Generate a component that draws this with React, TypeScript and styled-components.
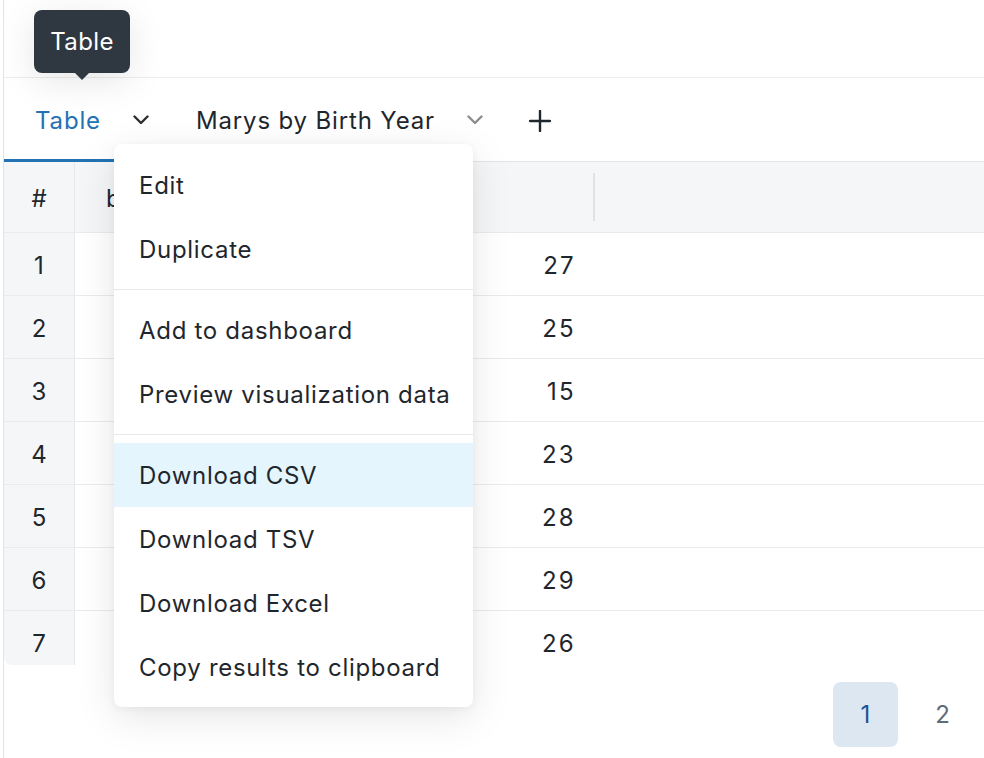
import React from "react";
import styled, { createGlobalStyle } from "styled-components";

const GlobalStyle = createGlobalStyle`
  html, body {
    margin: 0;
    padding: 0;
    background: #ffffff;
  }
  body {
    font-family: "Inter", "Noto Sans", sans-serif;
    color: #1f272d;
    letter-spacing: 0.7px;
    -webkit-font-smoothing: antialiased;
  }
`;

const counts = [27, 25, 15, 23, 28, 29, 26];

// menu groups, a divider is drawn between each group
const menuGroups = [
  ["Edit", "Duplicate"],
  ["Add to dashboard", "Preview visualization data"],
  ["Download CSV", "Download TSV", "Download Excel", "Copy results to clipboard"],
];

const Chevron: React.FC<{ muted?: boolean }> = ({ muted }) => (
  <svg width="16" height="10" viewBox="0 0 16 10" fill="none">
    <polyline
      points="1.5,1.5 8,8 14.5,1.5"
      stroke={muted ? "#8e8b91" : "#2b2f33"}
      strokeWidth="2.4"
      strokeLinecap="round"
      strokeLinejoin="round"
    />
  </svg>
);

const PlusIcon = () => (
  <svg width="22" height="22" viewBox="0 0 22 22" fill="none">
    <path d="M11 1v20M1 11h20" stroke="#1f272d" strokeWidth="2.4" strokeLinecap="round" />
  </svg>
);

const App: React.FC = () => {
  return (
    <>
      <GlobalStyle />
      <Page>
        <TopSpace />
        <TabBar>
          <Tab active>
            <TabLabel active>Table</TabLabel>
            <IconBox>
              <Chevron />
            </IconBox>
          </Tab>
          <Tab>
            <TabLabel>Marys by Birth Year</TabLabel>
            <IconBox>
              <Chevron muted />
            </IconBox>
          </Tab>
          <AddButton>
            <PlusIcon />
          </AddButton>
        </TabBar>

        <TableArea>
          <Row header>
            <IndexCell>#</IndexCell>
            <Cell>b</Cell>
            <Cell resizer />
            <Cell />
          </Row>
          {counts.map((c, i) => (
            <Row key={i}>
              <IndexCell>{i + 1}</IndexCell>
              <Cell />
              <Cell numeric>{c}</Cell>
              <Cell />
            </Row>
          ))}
        </TableArea>

        <Pagination>
          <PageButton current>1</PageButton>
          <PageButton>2</PageButton>
        </Pagination>

        <Tooltip>Table</Tooltip>

        <Menu>
          {menuGroups.map((group, gi) => (
            <React.Fragment key={gi}>
              {gi > 0 && <MenuDivider />}
              {group.map((label) => (
                <MenuItem key={label} highlighted={label === "Download CSV"}>
                  {label}
                </MenuItem>
              ))}
            </React.Fragment>
          ))}
        </Menu>
      </Page>
    </>
  );
};

const Page = styled.div`
  position: relative;
  margin-left: 3px;
  min-height: 758px;
  border-left: 1px solid #e4e4e4;
  display: flex;
  flex-direction: column;
  overflow: hidden;
`;

const TopSpace = styled.div`
  height: 77px;
  border-bottom: 1px solid #ececec;
`;

const TabBar = styled.div`
  display: flex;
  align-items: stretch;
  height: 83px;
  border-bottom: 1px solid #e4e4e4;
`;

const Tab = styled.div<{ active?: boolean }>`
  display: flex;
  align-items: center;
  padding: 0 12px 0 31px;
  border-bottom: 3px solid ${(p) => (p.active ? "#2272b4" : "transparent")};
  margin-bottom: -1px;
`;

const TabLabel = styled.span<{ active?: boolean }>`
  font-size: 24px;
  letter-spacing: 0.85px;
  white-space: nowrap;
  color: ${(p) => (p.active ? "#2272b4" : "#1f272d")};
  margin-right: 28px;
  padding-top: 3px;
`;

const IconBox = styled.span`
  display: flex;
  align-items: center;
  justify-content: center;
  width: 24px;
  height: 24px;
  padding-top: 3px;
`;

const AddButton = styled.div`
  display: flex;
  align-items: center;
  padding: 3px 0 0 30px;
`;

const TableArea = styled.div`
  display: flex;
  flex-direction: column;
  height: 503px;
  overflow: hidden;
  border-bottom-left-radius: 8px;
`;

const Row = styled.div<{ header?: boolean }>`
  display: grid;
  grid-template-columns: 71px 255px 265px 1fr;
  flex: none;
  height: ${(p) => (p.header ? "70px" : "62px")};
  background: ${(p) => (p.header ? "#f5f6f8" : "#ffffff")};
  border-bottom: 1px solid #ebebeb;
  font-size: 24px;
`;

const IndexCell = styled.div`
  display: flex;
  align-items: center;
  justify-content: center;
  background: #f5f6f8;
  border-right: 1px solid #e8e8e8;
  padding-top: 2px;
  letter-spacing: 0;
`;

const Cell = styled.div<{ numeric?: boolean; resizer?: boolean }>`
  position: relative;
  display: flex;
  align-items: center;
  justify-content: ${(p) => (p.numeric ? "flex-end" : "flex-start")};
  padding: 2px ${(p) => (p.numeric ? "19px" : "20px")} 0 31px;
  letter-spacing: ${(p) => (p.numeric ? "2.3px" : "0.7px")};

  ${(p) =>
    p.resizer &&
    `
    &::after {
      content: "";
      position: absolute;
      right: 0;
      top: 11px;
      bottom: 11px;
      width: 2px;
      background: #e2e2e2;
    }
  `}
`;

const Pagination = styled.div`
  display: flex;
  justify-content: flex-end;
  gap: 12px;
  padding: 17px 9px 0 0;
`;

const PageButton = styled.div<{ current?: boolean }>`
  width: 65px;
  height: 65px;
  display: flex;
  align-items: center;
  justify-content: center;
  border-radius: 8px;
  font-size: 24px;
  letter-spacing: 0;
  background: ${(p) => (p.current ? "#dce7f2" : "transparent")};
  color: ${(p) => (p.current ? "#1b5592" : "#5f6b78")};
`;

const Tooltip = styled.div`
  position: absolute;
  left: 30px;
  top: 10px;
  width: 96px;
  height: 63px;
  display: flex;
  align-items: center;
  justify-content: center;
  background: #2f3841;
  color: #ffffff;
  font-size: 24px;
  letter-spacing: 0.4px;
  border-radius: 8px;
  box-shadow: 0 8px 36px rgba(0, 0, 0, 0.1);

  &::after {
    content: "";
    position: absolute;
    left: 50%;
    bottom: -7px;
    margin-left: -7px;
    border-left: 7px solid transparent;
    border-right: 7px solid transparent;
    border-top: 7px solid #2f3841;
  }
`;

const Menu = styled.div`
  position: absolute;
  left: 110px;
  top: 144px;
  width: 359px;
  padding: 9px 0 8px;
  background: #ffffff;
  border-radius: 8px;
  box-shadow: 0 10px 40px rgba(0, 0, 0, 0.1), 0 2px 8px rgba(0, 0, 0, 0.05);
`;

const MenuItem = styled.div<{ highlighted?: boolean }>`
  height: 64px;
  display: flex;
  align-items: center;
  padding: 0 20px 0 25px;
  font-size: 24px;
  white-space: nowrap;
  color: #1f272d;
  background: ${(p) => (p.highlighted ? "#e4f5fd" : "transparent")};
`;

const MenuDivider = styled.div`
  height: 1px;
  margin: 8px 0;
  background: #e8e8e8;
`;

export default App;
